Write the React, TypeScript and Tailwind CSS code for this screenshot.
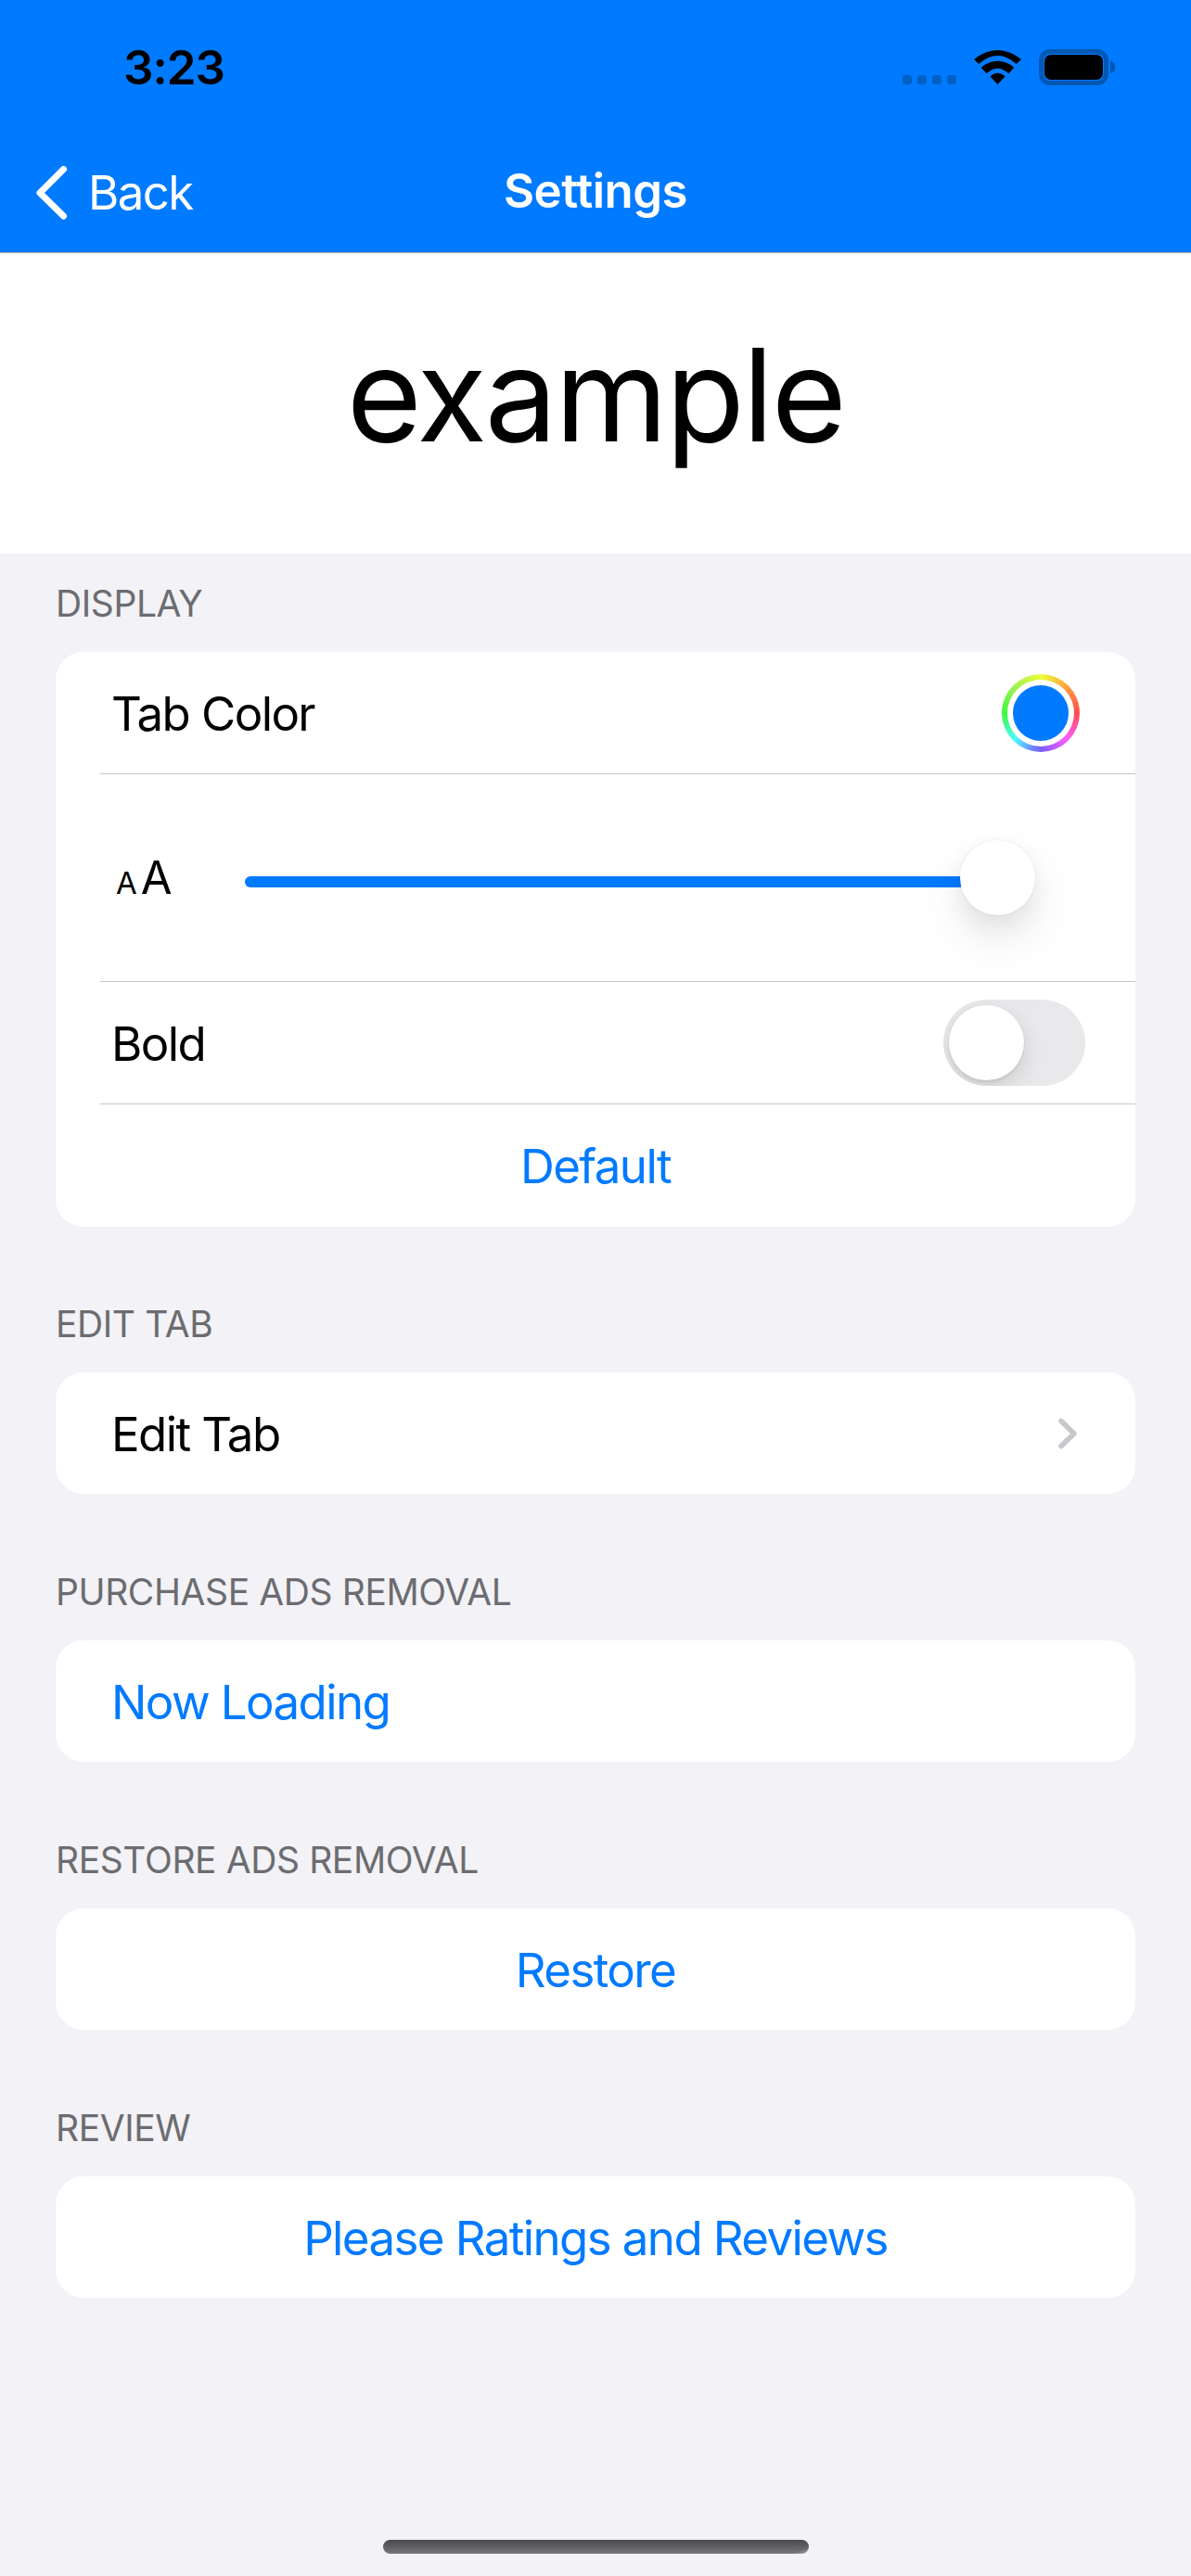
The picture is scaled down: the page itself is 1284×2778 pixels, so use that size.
import React from "react";

function Label({ children }: { children: React.ReactNode }) {
  return (
    <div className="h-[48px] mb-[29px] pt-px pl-[60px] text-[39px] leading-[48px] text-[#6c6c70] tracking-[-0.4px]">
      {children}
    </div>
  );
}

function Sep() {
  return <div className="ml-[48px] h-px bg-[#c6c6c8]" />;
}

function T({ children }: { children: React.ReactNode }) {
  return <span className="mt-[3px]">{children}</span>;
}

function Row({ children, center }: { children: React.ReactNode; center?: boolean }) {
  return (
    <div
      className={
        "h-[131px] flex items-center text-[51px] tracking-[-1.6px] " +
        (center ? "justify-center text-[#007aff]" : "justify-between pl-[60px] text-black")
      }
    >
      {children}
    </div>
  );
}

export default function App() {
  return (
    <div className="w-[1284px] h-[2778px] flex flex-col bg-[#f2f2f7] font-['Inter',sans-serif]">
      {/* Status + nav */}
      <div className="bg-[#007aff] h-[273px] border-b border-[#a9a9ad] shrink-0">
        <div className="h-[140px] flex justify-between items-start pt-[53px] pl-[133px] pr-[82px]">
          <span className="text-[51px] leading-[40px] font-semibold text-black tracking-[-1px]">3:23</span>
          <div className="flex items-start">
            <div className="flex gap-[6px] mt-[28px] mr-[19px]">
              <div className="w-[10px] h-[10px] rounded-[3px] bg-[#0060c4]" />
              <div className="w-[10px] h-[10px] rounded-[3px] bg-[#0060c4]" />
              <div className="w-[10px] h-[10px] rounded-[3px] bg-[#0060c4]" />
              <div className="w-[10px] h-[10px] rounded-[3px] bg-[#0060c4]" />
            </div>
            <svg className="mt-[1px] mr-[19px]" width="51" height="37" viewBox="0 0 51 37" fill="#000">
              <path d="M0 10 Q25.5 -10 51 10 L45.7 15 Q25.5 -3 5.3 15 Z" />
              <path d="M7.7 18.7 Q25.5 5 43.3 18.7 L37.5 25.3 Q25.5 14 13.5 25.3 Z" />
              <path d="M25.5 37 L17.5 28.5 Q25.5 21 33.5 28.5 Z" />
            </svg>
            <div className="w-[75px] h-[39px] rounded-[12px] border-[5px] border-[#0058b4] p-px">
              <div className="w-full h-full rounded-[7px] bg-black" />
            </div>
            <div className="w-[5px] h-[13px] mt-[13px] ml-[2px] rounded-r-full bg-[#0058b4]" />
          </div>
        </div>
        <div className="relative h-[132px] flex items-center justify-center">
          <div className="absolute left-[36px] top-[38px] flex items-center">
            <svg width="38" height="58" viewBox="0 0 38 58" fill="none" stroke="#fff" strokeWidth="7" strokeLinecap="round" strokeLinejoin="round">
              <path d="M32.5 3.5 L7 29 L32.5 54" />
            </svg>
            <span className="ml-[21px] text-[51px] leading-[60px] text-white tracking-[-1.6px]">Back</span>
          </div>
          <span className="text-[51px] leading-[60px] font-semibold text-white tracking-[-0.5px]">Settings</span>
        </div>
      </div>

      {/* Preview */}
      <div className="bg-white h-[324px] shrink-0 flex items-center justify-center pb-[20px] text-[139px] leading-none text-black tracking-[-2.4px]">
        example
      </div>

      {/* Sections */}
      <div className="pt-[29px] flex flex-col gap-[81px]">
        <section>
          <Label>DISPLAY</Label>
          <div className="mx-[60px] -mb-px pb-px bg-white rounded-[30px]">
            <Row>
              <T>Tab Color</T>
              <div className="mr-[60px] w-[84px] h-[84px] rounded-full p-[6px] bg-[conic-gradient(#eaff3c,#ffa040,#ff4d4d,#ff5cff,#7a5cff,#4dfcff,#3dfa3d,#a0f050,#eaff3c)]">
                <div className="w-full h-full rounded-full bg-white p-[6px]">
                  <div className="w-full h-full rounded-full bg-[#007aff]" />
                </div>
              </div>
            </Row>
            <Sep />
            <div className="h-[223px] flex items-center pl-[65px]">
              <div className="w-[58px] h-[60px] flex items-baseline">
                <span className="text-[33px] leading-[60px]">A</span>
                <span className="text-[49px] leading-[60px] ml-[4px]">A</span>
              </div>
              <div className="ml-[81px] flex items-center">
                <div className="w-[772px] h-[12px] mt-[8px] rounded-l-full bg-[#007aff]" />
                <div className="-ml-px w-[81px] h-[81px] rounded-full bg-white shadow-[0_24px_48px_rgba(0,0,0,0.1),0_9px_24px_rgba(0,0,0,0.05),0_0_3px_rgba(0,0,0,0.08)]" />
              </div>
            </div>
            <Sep />
            <Row>
              <T>Bold</T>
              <div className="mr-[54px] w-[153px] h-[93px] rounded-full bg-[#e9e9eb] p-[6px] overflow-hidden">
                <div className="w-[81px] h-[81px] rounded-full bg-white shadow-[0_9px_24px_rgba(0,0,0,0.12),0_3px_3px_rgba(0,0,0,0.06),0_0_3px_rgba(0,0,0,0.04)]" />
              </div>
            </Row>
            <Sep />
            <Row center>
              <T>Default</T>
            </Row>
          </div>
        </section>

        <section>
          <Label>EDIT TAB</Label>
          <div className="mx-[60px] bg-white rounded-[30px]">
            <Row>
              <T>Edit Tab</T>
              <svg className="mr-[61px]" width="24" height="36" viewBox="0 0 24 36" fill="none" stroke="#c7c7cc" strokeWidth="5.5" strokeLinecap="round" strokeLinejoin="round">
                <path d="M5 4.5 L19 18 L5 31.5" />
              </svg>
            </Row>
          </div>
        </section>

        <section>
          <Label>PURCHASE ADS REMOVAL</Label>
          <div className="mx-[60px] bg-white rounded-[30px]">
            <Row>
              <T>
                <span className="text-[#007aff]">Now Loading</span>
              </T>
            </Row>
          </div>
        </section>

        <section>
          <Label>RESTORE ADS REMOVAL</Label>
          <div className="mx-[60px] bg-white rounded-[30px]">
            <Row center>
              <T>Restore</T>
            </Row>
          </div>
        </section>

        <section>
          <Label>REVIEW</Label>
          <div className="mx-[60px] bg-white rounded-[30px]">
            <Row center>
              <T>Please Ratings and Reviews</T>
            </Row>
          </div>
        </section>
      </div>

      <div className="mt-auto mb-[24px] mx-auto w-[459px] h-[15px] rounded-full bg-[linear-gradient(160deg,transparent_96%,rgba(255,255,255,0.4)),linear-gradient(to_bottom,#4a4a4c,#767678)]" />
    </div>
  );
}
